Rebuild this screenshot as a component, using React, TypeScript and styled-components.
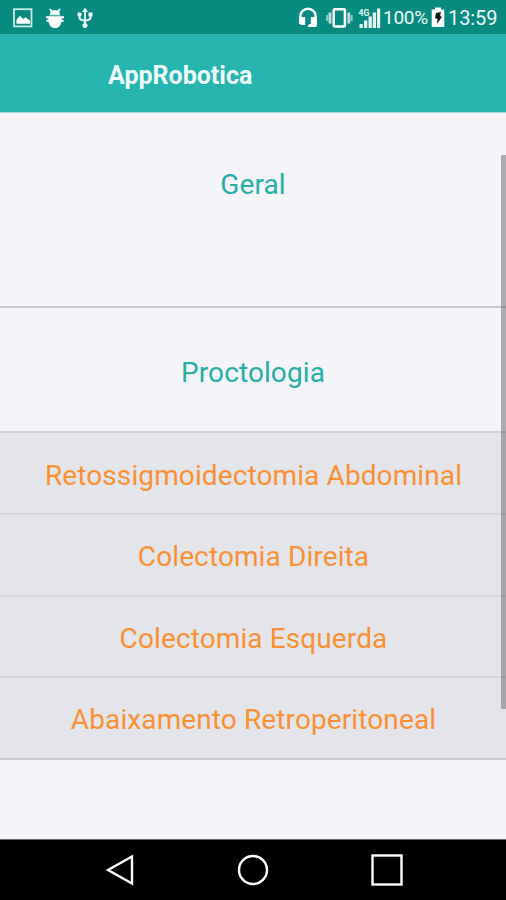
import React from "react";
import styled, { createGlobalStyle } from "styled-components";

const GlobalStyle = createGlobalStyle`
  * { box-sizing: border-box; }
  html, body { margin: 0; padding: 0; background: #f4f4f9; }
  body { font-family: Roboto, "Liberation Sans", sans-serif; overflow: hidden; }
`;

const Screen = styled.div`
  width: 506px;
  height: 900px;
  display: flex;
  flex-direction: column;
  background: #f4f4f9;
`;

const StatusBar = styled.header`
  height: 34px;
  flex: none;
  display: flex;
  justify-content: space-between;
  align-items: center;
  background: #078a80;
  color: #eefaf9;
  padding: 0 8px 0 12px;
`;

const StatusGroup = styled.div<{ $gap?: number }>`
  display: flex;
  align-items: center;
  height: 34px;
  padding-top: 1px;
  gap: ${(p) => p.$gap ?? 0}px;

  svg { display: block; flex: none; }
`;

const StatusIcon = styled.span<{ $right: number }>`
  margin-right: ${(p) => p.$right}px;
`;

const StatusText = styled.span<{ $width: number; $spacing: number; $left: number; $size: number }>`
  width: ${(p) => p.$width}px;
  margin-left: ${(p) => p.$left}px;
  font-size: ${(p) => p.$size}px;
  line-height: 34px;
  padding-top: 1px;
  letter-spacing: ${(p) => p.$spacing}px;
  white-space: nowrap;
`;

const AppBar = styled.div`
  height: 79px;
  flex: none;
  display: flex;
  align-items: center;
  padding: 6px 0 0 108px;
  background: #25b4b0;
  border-bottom: 1px solid #a5d5d8;
`;

const Title = styled.h1`
  margin: 0;
  font-size: 25px;
  line-height: 30px;
  font-weight: 700;
  color: #effcfd;
`;

const Content = styled.main`
  position: relative;
  flex: 1;
  display: flex;
  flex-direction: column;
`;

const Group = styled.section<{ $height: number; $top: number; $line: string }>`
  height: ${(p) => p.$height}px;
  padding-top: ${(p) => p.$top}px;
  border-bottom: 2px solid ${(p) => p.$line};
  text-align: center;
`;

const GroupName = styled.h2`
  margin: 0;
  font-size: 28px;
  line-height: 34px;
  font-weight: 400;
  letter-spacing: 0.1px;
  color: #25aea5;
`;

const List = styled.ul`
  list-style: none;
  margin: 0;
  padding: 0;
  background: #e4e5ea;
  border-bottom: 2px solid #c9c9ce;
`;

const Item = styled.li<{ $height: number }>`
  height: ${(p) => p.$height}px;
  display: flex;
  align-items: center;
  justify-content: center;
  padding: 6px 0 0 1px;
  font-size: 28px;
  line-height: 34px;
  letter-spacing: 0.11px;
  white-space: nowrap;
  color: #fa9032;

  & + & { padding-top: 4px; border-top: 2px solid #d5d5da; }
`;

const ScrollThumb = styled.div`
  position: absolute;
  top: 42px;
  right: 0;
  width: 5px;
  height: 554px;
  background: rgba(100, 100, 104, 0.5);
`;

const NavBar = styled.nav`
  height: 61px;
  flex: none;
  display: flex;
  justify-content: center;
  gap: 102px;
  padding-top: 14px;
  background: #000;
  border-top: 1px solid #6c6c6e;

  svg { display: block; flex: none; }
`;

const items = [
  { name: "Retossigmoidectomia Abdominal", height: 80 },
  { name: "Colectomia Direita", height: 82 },
  { name: "Colectomia Esquerda", height: 81 },
  { name: "Abaixamento Retroperitoneal", height: 82 },
];

const PictureIcon = () => (
  <svg width="22" height="20" viewBox="0 0 22 20">
    <rect x="2" y="1.2" width="17.5" height="17.2" fill="none" stroke="#c9ebe8" strokeWidth="1.8" />
    <path d="M4.5 15.8v-4l3.4-4 3.2 3.2 2.5-1.8 4.4 3.6v3z" fill="#fff" />
  </svg>
);

const DebugIcon = () => (
  <svg width="20" height="20" viewBox="0 0 20 20" fill="#fff">
    <path d="M4.2 1.2 5.2.5l2 2.1a7 7 0 0 1 5.4 0l2-2.1 1 .7-1.5 2.7a6 6 0 0 1 .9 3H5a6 6 0 0 1 .8-3z" />
    <path d="M1 8.3h18v2h-2.3v1.5h1.8v2h-2.1a6.3 6.3 0 0 1-12.8 0H1.5v-2h1.8v-1.5H1z" />
    <path d="M4 7.3h12" stroke="#62b8b1" strokeWidth="1" />
  </svg>
);

const UsbIcon = () => (
  <svg width="18" height="22" viewBox="0 0 18 22" fill="#e7f7f5" stroke="#e7f7f5">
    <path d="M9 4v14M3.5 7v3.5q0 2 2.5 2.5l3 1 3-1q2.5-.5 2.5-2.5V7" fill="none" strokeWidth="2" />
    <path d="M9 .5 12 5H6z" stroke="none" />
    <circle cx="3.5" cy="7.5" r="2.2" stroke="none" />
    <rect x="12.5" y="5.5" width="4" height="4" stroke="none" />
    <circle cx="9" cy="18.5" r="2.5" stroke="none" />
  </svg>
);

const HeadsetIcon = () => (
  <svg width="18" height="21" viewBox="0 0 18 21">
    <path d="M1.4 17V9.3a7.6 7.6 0 0 1 15.2 0v9H10" fill="none" stroke="#fff" strokeWidth="2.5" />
    <path d="M.5 10h5.7v8H3Q.5 18 .5 15zM11.8 10h5.7v8q0 2-2 2H9v-2h2.8z" fill="#fff" />
  </svg>
);

const VibrateIcon = () => (
  <svg width="27" height="22" viewBox="0 0 27 22">
    <rect x="7.7" y="2.3" width="11.2" height="17.3" rx="1" fill="none" stroke="#fff" strokeWidth="2.5" />
    <path d="M4 5.5v11M22.8 5.5v11" stroke="#b8e0dc" strokeWidth="2.8" />
    <path d="M1.3 8v6M25.5 8v6" stroke="#87c9c3" strokeWidth="2.4" />
  </svg>
);

const SignalIcon = () => (
  <svg width="23" height="22" viewBox="0 0 23 22" fill="#e4f5f3">
    <path d="M1.500 17h3.300v4H1.500zM6 13.500h3.300V21H6zM10.500 9.500h3.300V21h-3.300zM14.700 5.500H18V21h-3.300zM19 1.500h3.200V21H19z" />
    <text x="0.500" y="8.800" fontSize="8.500" fontWeight="700" fontFamily="Roboto, sans-serif">4G</text>
  </svg>
);

const BatteryIcon = () => (
  <svg width="14" height="21" viewBox="0 0 14 21">
    <path d="M4 .5h6v2h3.3V20H.7V2.5H4z" fill="#fff" />
    <path d="m5 6 5-1-1 4 2 .8L6 17l.5-5L4 11z" fill="#101817" />
  </svg>
);

export default function App() {
  return (
    <>
      <GlobalStyle />
      <Screen>
        <StatusBar>
          <StatusGroup $gap={11}>
            <PictureIcon />
            <DebugIcon />
            <UsbIcon />
          </StatusGroup>
          <StatusGroup>
            <StatusIcon $right={9}><HeadsetIcon /></StatusIcon>
            <StatusIcon $right={5}><VibrateIcon /></StatusIcon>
            <StatusIcon $right={2}><SignalIcon /></StatusIcon>
            <StatusText $width={48} $left={0} $spacing={-0.3} $size={19}>100%</StatusText>
            <BatteryIcon />
            <StatusText $width={50} $left={3} $spacing={-0.1} $size={20}>13:59</StatusText>
          </StatusGroup>
        </StatusBar>
        <AppBar>
          <Title>AppRobotica</Title>
        </AppBar>
        <Content>
          <Group $height={195} $top={55} $line="#c6c6cb">
            <GroupName>Geral</GroupName>
          </Group>
          <Group $height={125} $top={48} $line="#d0d0d5">
            <GroupName>Proctologia</GroupName>
          </Group>
          <List>
            {items.map((item) => (
              <Item key={item.name} $height={item.height}>
                {item.name}
              </Item>
            ))}
          </List>
          <ScrollThumb />
        </Content>
        <NavBar>
          <svg width="32" height="32" viewBox="0 0 32 32" fill="none" stroke="#fff" strokeWidth="2.4">
            <path d="M29 2.5v27L5 16z" />
          </svg>
          <svg width="32" height="32" viewBox="0 0 32 32" fill="none" stroke="#fff" strokeWidth="2.4">
            <circle cx="16" cy="16" r="14" />
          </svg>
          <svg width="32" height="32" viewBox="0 0 32 32" fill="none" stroke="#fff" strokeWidth="2.4">
            <rect x="1.500" y="1.500" width="29" height="29" />
          </svg>
        </NavBar>
      </Screen>
    </>
  );
}
